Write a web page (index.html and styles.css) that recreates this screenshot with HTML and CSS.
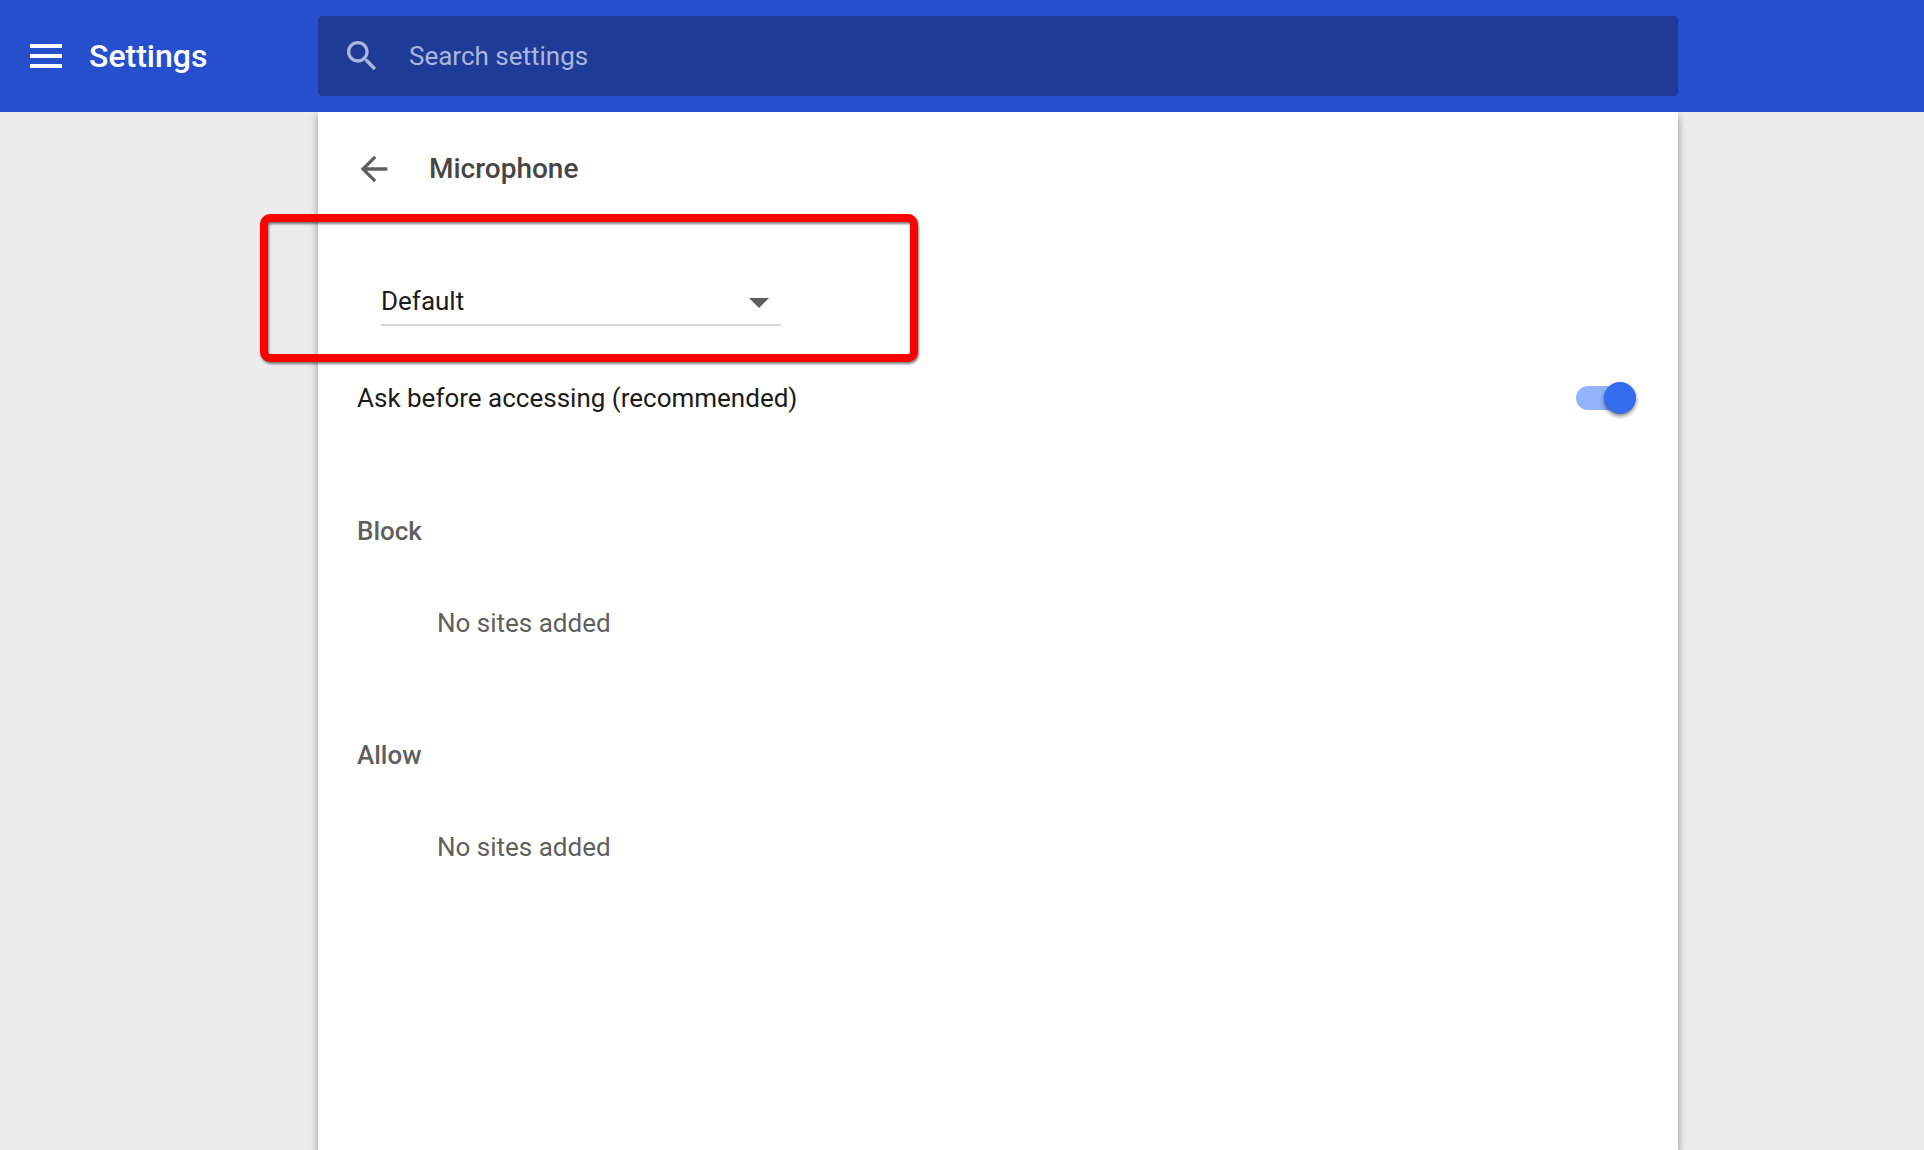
FILE: index.html
```html
<!DOCTYPE html>
<html lang="en">
<head>
    <meta charset="UTF-8">
    <meta name="viewport" content="width=device-width, initial-scale=1.0">
    <title>Settings - Microphone</title>
    <link rel="stylesheet" href="styles.css">
</head>
<body>
    <!-- Toolbar -->
    <header class="toolbar">
        <div class="toolbar-left">
            <button class="icon-btn" type="button" aria-label="Main menu">
                <svg class="menu-icon" viewBox="0 0 32 24" fill="currentColor">
                    <path d="M0 0h32v4H0zM0 10h32v4H0zM0 20h32v4H0z"/>
                </svg>
            </button>
            <h1>Settings</h1>
        </div>
        <label class="search">
            <svg class="search-icon" viewBox="0 0 24 24" fill="currentColor">
                <path d="M15.5 14h-.79l-.28-.27C15.41 12.59 16 11.11 16 9.5 16 5.91 13.09 3 9.5 3S3 5.91 3 9.5 5.91 16 9.5 16c1.61 0 3.09-.59 4.23-1.57l.27.28v.79l5 4.99L20.49 19l-4.99-5zm-6 0C7.01 14 5 11.99 5 9.5S7.01 5 9.5 5 14 7.01 14 9.5 11.99 14 9.5 14z"/>
            </svg>
            <input type="search" placeholder="Search settings" aria-label="Search settings">
        </label>
    </header>

    <!-- Microphone page -->
    <div class="page">
        <main class="card">
            <div class="card-header">
                <button class="icon-btn" type="button" aria-label="Back">
                    <svg class="back-icon" viewBox="0 0 24 24" fill="currentColor">
                        <path d="M20 11H7.83l5.59-5.59L12 4l-8 8 8 8 1.41-1.41L7.83 13H20v-2z"/>
                    </svg>
                </button>
                <h2>Microphone</h2>
            </div>

            <div class="device">
                <div class="select-wrap">
                    <select aria-label="Microphone">
                        <option>Default</option>
                    </select>
                    <svg class="select-arrow" viewBox="0 0 20 10" fill="currentColor">
                        <path d="M0 0h20L10 10z"/>
                    </svg>
                </div>
                <div class="highlight"></div>
            </div>

            <div class="setting">
                <label for="ask">Ask before accessing (recommended)</label>
                <input id="ask" class="toggle" type="checkbox" checked>
            </div>

            <section class="sites">
                <h3>Block</h3>
                <p>No sites added</p>
            </section>

            <section class="sites">
                <h3>Allow</h3>
                <p>No sites added</p>
            </section>
        </main>
    </div>
</body>
</html>
```
FILE: styles.css
```css
* {
    margin: 0;
    padding: 0;
    box-sizing: border-box;
}

body {
    font-family: Roboto, sans-serif;
    font-size: 26px;
    line-height: 32px;
    background: #ececec;
    color: #1b1b1b;
    min-height: 100vh;
    display: flex;
    flex-direction: column;
}

button,
input,
select {
    font: inherit;
    color: inherit;
    border: none;
    background: none;
}

svg {
    display: block;
}

.icon-btn {
    cursor: pointer;
}

/* Toolbar */
.toolbar,
.page {
    display: grid;
    grid-template-columns: 318px minmax(0, 1360px) 1fr;
}

.toolbar {
    position: relative;
    z-index: 1;
    height: 112px;
    align-items: center;
    background: #264fce;
    color: white;
}

.toolbar-left {
    display: flex;
    align-items: center;
    gap: 27px;
    padding-left: 30px;
}

.menu-icon {
    width: 32px;
    height: 24px;
}

h1 {
    font-size: 32px;
    font-weight: 500;
}

.search {
    display: flex;
    align-items: center;
    gap: 27px;
    height: 80px;
    padding: 0 24px;
    border-radius: 4px;
    background: #1e3b97;
    color: #aab7dc;
}

.search-icon {
    width: 40px;
    height: 40px;
}

.search input {
    flex: 1;
    outline: none;
}

.search input::placeholder {
    color: #aab7dc;
    opacity: 1;
}

/* Card */
.page {
    flex: 1;
}

.card {
    grid-column: 2;
    background: white;
    box-shadow: 0 4px 8px rgba(0, 0, 0, 0.4);
}

.card-header {
    display: flex;
    align-items: center;
    gap: 35px;
    height: 114px;
    padding: 0 36px;
}

.back-icon {
    width: 40px;
    height: 40px;
    color: #5f5f5f;
}

h2 {
    font-size: 28px;
    font-weight: 500;
    color: #464646;
}

.device {
    position: relative;
    padding: 46px 63px 32px;
}

.select-wrap {
    position: relative;
    max-width: 400px;
}

.select-wrap select {
    display: block;
    width: 100%;
    height: 54px;
    padding-top: 6px;
    appearance: none;
    border-bottom: 2px solid #d8d8d8;
}

.select-arrow {
    position: absolute;
    right: 12px;
    top: 26px;
    width: 20px;
    height: 10px;
    color: #5f5f5f;
    pointer-events: none;
}

.highlight {
    position: absolute;
    left: -58px;
    top: -12px;
    width: 658px;
    height: 148px;
    border: 8px solid #ff0000;
    border-radius: 10px;
    filter: drop-shadow(1px 2px 1px rgba(0, 0, 0, 0.5));
    pointer-events: none;
}

.setting {
    display: flex;
    align-items: center;
    justify-content: space-between;
    height: 80px;
    margin-bottom: 47px;
    padding: 0 42px 0 39px;
}

.toggle {
    appearance: none;
    display: flex;
    align-items: center;
    width: 60px;
    height: 24px;
    border-radius: 12px;
    background: #bdbdbd;
    cursor: pointer;
}

.toggle::before {
    content: "";
    width: 32px;
    height: 32px;
    border-radius: 50%;
    background: white;
    box-shadow: 0 2px 4px rgba(0, 0, 0, 0.5);
}

.toggle:checked {
    justify-content: flex-end;
    background: #93b3fb;
}

.toggle:checked::before {
    background: #336dee;
}

.sites {
    margin-bottom: 40px;
    padding: 0 39px;
    color: #5f5f5f;
}

.sites h3 {
    font-size: 26px;
    font-weight: 500;
    line-height: 92px;
}

.sites p {
    padding-left: 80px;
    line-height: 92px;
}
```
